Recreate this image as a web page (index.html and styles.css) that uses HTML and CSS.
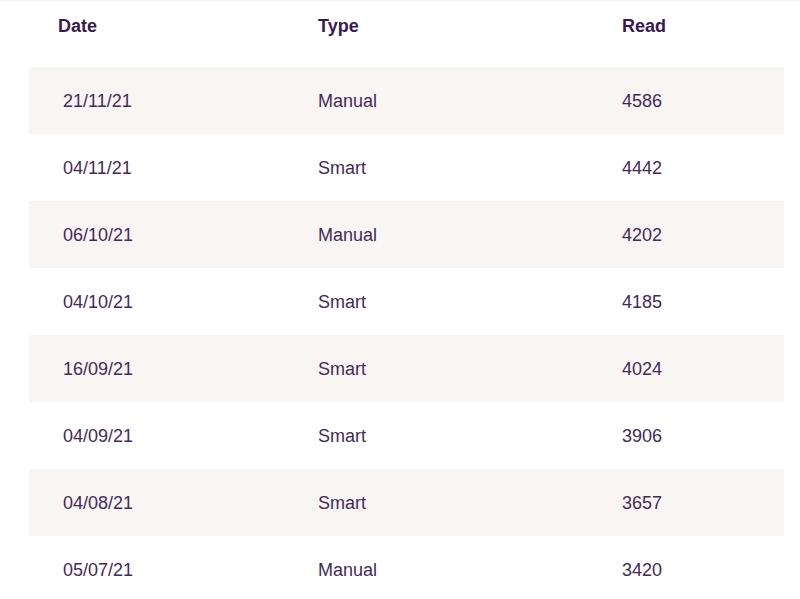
FILE: index.html
```html
<!DOCTYPE html>
<html>
<head>
<meta charset="utf-8">
<link rel="stylesheet" href="styles.css">
</head>
<body>
<div class="table">
  <div class="row head">
    <div class="cell">Date</div>
    <div class="cell">Type</div>
    <div class="cell">Read</div>
  </div>
  <div class="row shaded"><div class="cell date">21/11/21</div><div class="cell">Manual</div><div class="cell">4586</div></div>
  <div class="row"><div class="cell date">04/11/21</div><div class="cell">Smart</div><div class="cell">4442</div></div>
  <div class="row shaded"><div class="cell date">06/10/21</div><div class="cell">Manual</div><div class="cell">4202</div></div>
  <div class="row"><div class="cell date">04/10/21</div><div class="cell">Smart</div><div class="cell">4185</div></div>
  <div class="row shaded"><div class="cell date">16/09/21</div><div class="cell">Smart</div><div class="cell">4024</div></div>
  <div class="row"><div class="cell date">04/09/21</div><div class="cell">Smart</div><div class="cell">3906</div></div>
  <div class="row shaded"><div class="cell date">04/08/21</div><div class="cell">Smart</div><div class="cell">3657</div></div>
  <div class="row"><div class="cell date">05/07/21</div><div class="cell">Manual</div><div class="cell">3420</div></div>
</div>
</body>
</html>
```
FILE: styles.css
```css
html, body {
  margin: 0;
  padding: 0;
  background: #ffffff;
}
body {
  font-family: "Liberation Sans", Arial, sans-serif;
  font-size: 18px;
  color: #442a5a;
  border-top: 1px solid #f3f3f3;
  box-sizing: border-box;
  height: 599px;
  overflow: hidden;
}
.table {
  margin-left: 29px;
  width: 755px;
  margin-top: -1px;
}
.row {
  display: grid;
  grid-template-columns: 260px 304px 1fr;
  height: 67px;
  align-items: center;
  padding-left: 29px;
  box-sizing: border-box;
  line-height: 20px;
}
.row.head {
  align-items: start;
  padding-top: 16px;
  font-weight: bold;
  color: #3a1750;
}
.row.shaded {
  background: #f9f5f3;
}
.cell.date {
  padding-left: 5px;
}
```
